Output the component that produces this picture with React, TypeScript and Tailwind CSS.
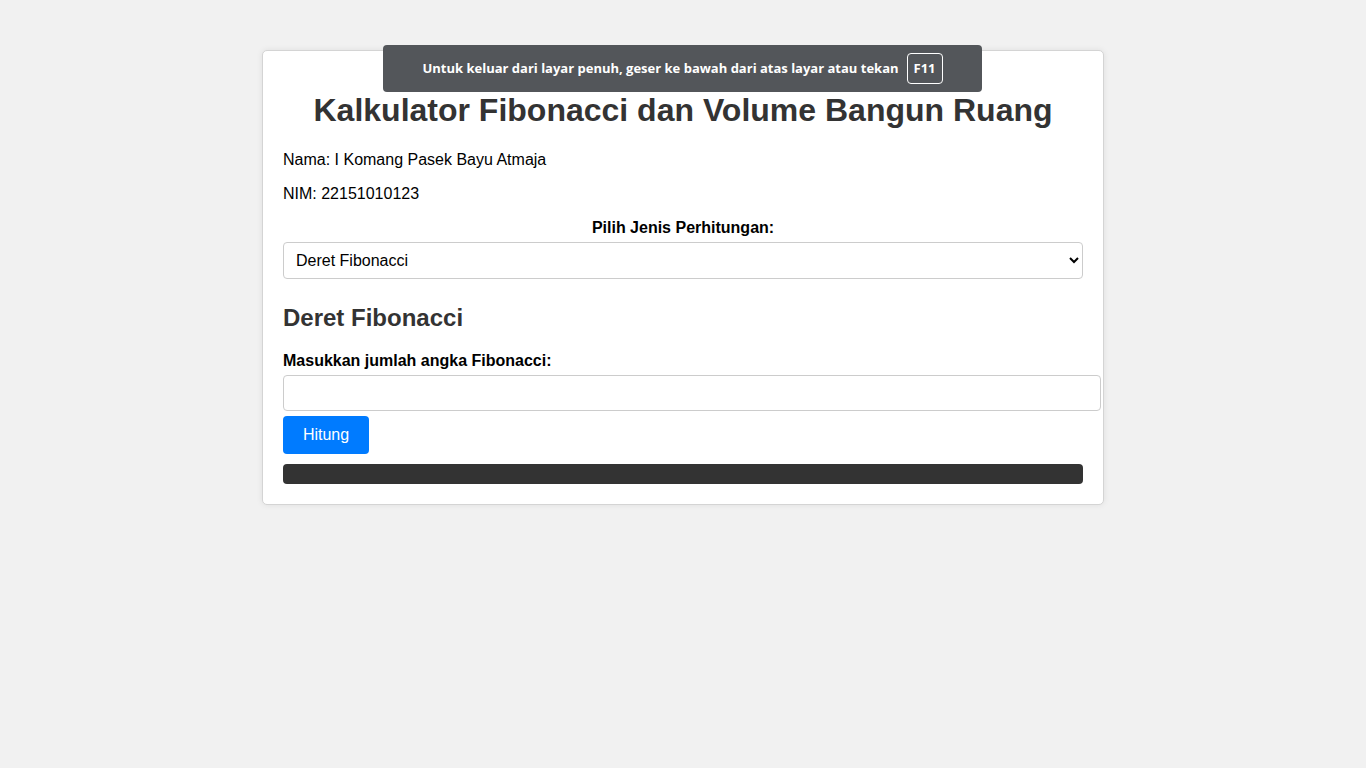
export default function App() {
  return (
    <div className="relative min-h-screen bg-[#f1f1f1] pt-[50px] font-['Liberation_Sans',Arial,sans-serif] text-black">
      <div className="mx-auto w-[842px] rounded-[5px] border border-[#d4d4d4] bg-white p-5 shadow-[0_0_6px_rgba(0,0,0,0.08)]">
        <h1 className="mt-[21px] mb-[22px] text-center text-[32px] leading-[37px] font-bold text-[#333]">
          Kalkulator Fibonacci dan Volume Bangun Ruang
        </h1>
        <p className="mb-4 text-base leading-[18px]">Nama: I Komang Pasek Bayu Atmaja</p>
        <p className="mb-4 text-base leading-[18px]">NIM: 22151010123</p>
        <label className="mb-[5px] block text-center leading-[18px] font-bold">Pilih Jenis Perhitungan:</label>
        <select
          defaultValue="fibonacci"
          className="block h-[37px] w-full rounded border border-[#ccc] bg-white pr-1 pl-2 text-base"
        >
          <option value="fibonacci">Deret Fibonacci</option>
          <option value="volume">Volume Bangun Ruang</option>
        </select>
        <h2 className="mt-[25px] mb-5 text-2xl leading-[28px] font-bold text-[#333]">Deret Fibonacci</h2>
        <label className="mb-[5px] block leading-[18px] font-bold">Masukkan jumlah angka Fibonacci:</label>
        <input type="number" className="block h-9 w-[818px] rounded border border-[#ccc] bg-white px-2 text-base" />
        <button className="mt-[5px] block h-[38px] w-[86px] rounded bg-[#007bff] text-base text-white">Hitung</button>
        <div className="mt-[10px] h-5 rounded bg-[#333]" />
      </div>

      <div className="absolute top-[45px] left-[383px] flex h-[47px] w-[599px] items-center justify-center gap-2 rounded-[4px] bg-[#53565a] font-['Open_Sans',sans-serif] text-[13px] font-bold text-white">
        <span>Untuk keluar dari layar penuh, geser ke bawah dari atas layar atau tekan</span>
        <span className="flex h-[31px] w-9 items-center justify-center rounded-[4px] border border-white">F11</span>
      </div>
    </div>
  );
}
